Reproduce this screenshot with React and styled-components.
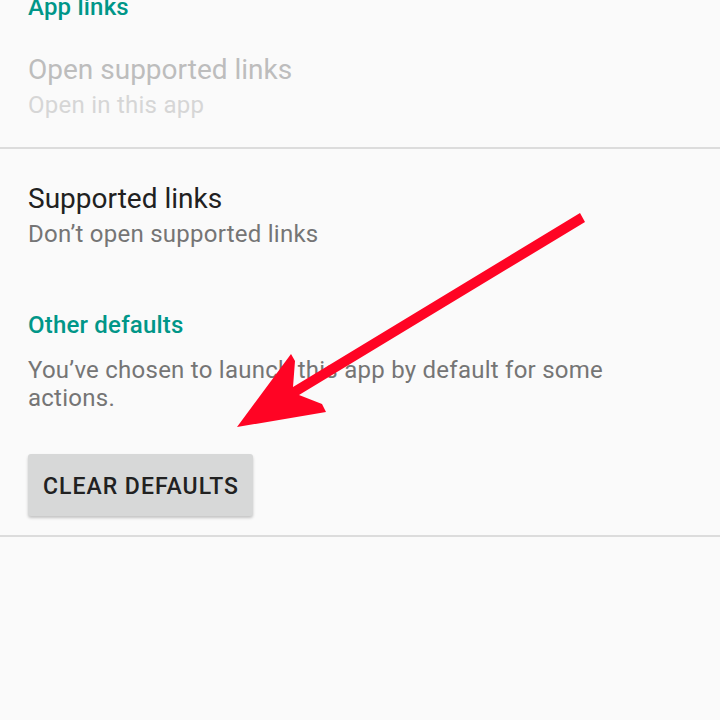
import React from "react";
import styled, { createGlobalStyle } from "styled-components";

const Global = createGlobalStyle`
  html, body {
    margin: 0;
    padding: 0;
    background: #fafafa;
    font-family: Roboto, "Noto Sans", "Liberation Sans", sans-serif;
    overflow: hidden;
  }
`;

const Screen = styled.div`
  position: relative;
  width: 720px;
  height: 720px;
  overflow: hidden;
  background: #fafafa;
`;

const Content = styled.div`
  display: flex;
  flex-direction: column;
  margin-top: -9px;
`;

const Block = styled.div`
  display: flex;
  flex-direction: column;
  padding: 0 28px;
`;

const CategoryTitle = styled.div`
  font-size: 24px;
  line-height: 32px;
  font-weight: 500;
  letter-spacing: 0.2px;
  color: #009688;
  margin-top: ${(p) => p.$top || 0}px;
`;

const PrefTitle = styled.div`
  font-size: 28px;
  line-height: 36px;
  color: ${(p) => (p.$disabled ? "#bdbdbd" : "#212121")};
  margin-top: ${(p) => p.$top || 0}px;
`;

const PrefSummary = styled.div`
  font-size: 24px;
  line-height: 32px;
  letter-spacing: 0.25px;
  margin-top: 1px;
  color: ${(p) => (p.$disabled ? "#d6d6d6" : "#757575")};
`;

const Body = styled.p`
  margin: 15px 0 0;
  max-width: 600px;
  font-size: 24px;
  line-height: 28px;
  letter-spacing: 0.25px;
  color: #757575;
`;

const Divider = styled.div`
  height: 2px;
  background: #dcdcdc;
  margin-top: ${(p) => p.$top || 0}px;
`;

const RaisedButton = styled.button`
  align-self: flex-start;
  margin-top: 42px;
  height: 62px;
  padding: 3px 14px 0 15px;
  border: none;
  border-radius: 3px;
  background: #d7d8d8;
  box-shadow: 0 2px 3px rgba(0, 0, 0, 0.22);
  font-family: Roboto, "Noto Sans", sans-serif;
  font-size: 23px;
  font-weight: 500;
  letter-spacing: 1px;
  color: #212121;
  text-transform: uppercase;
`;

const Annotation = styled.svg`
  position: absolute;
  left: 0;
  top: 0;
  width: 720px;
  height: 720px;
  pointer-events: none;
`;

function PointerArrow() {
  return (
    <Annotation viewBox="0 0 720 720">
      <polygon
        fill="#ff0424"
        points="237,427 291,354 295,361 293,387 580,213 585,222 299,395 322,404 326,412"
      />
    </Annotation>
  );
}

export default function App() {
  return (
    <Screen>
      <Global />
      <Content>
        <Block>
          <CategoryTitle>App links</CategoryTitle>
          <PrefTitle $disabled $top={29}>Open supported links</PrefTitle>
          <PrefSummary $disabled>Open in this app</PrefSummary>
        </Block>
        <Divider $top={26} />
        <Block>
          <PrefTitle $top={32}>Supported links</PrefTitle>
          <PrefSummary>Don’t open supported links</PrefSummary>
          <CategoryTitle $top={59}>Other defaults</CategoryTitle>
          <Body>You’ve chosen to launch this app by default for some actions.</Body>
          <RaisedButton>Clear defaults</RaisedButton>
        </Block>
        <Divider $top={19} />
      </Content>
      <PointerArrow />
    </Screen>
  );
}
